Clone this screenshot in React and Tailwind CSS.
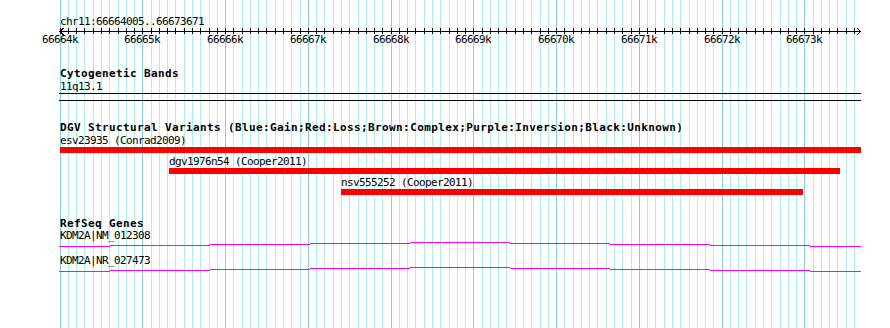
import React from 'react';

const PX_PER_BP = 800 / 9667;
const START = 66664005;
const xAt = (bp) => 60 + (bp - START) * PX_PER_BP;

// grid positions, every 100bp
const ticks = [];
for (let k = 0; k < 97; k++) {
  ticks.push({ x: Math.round(xAt(66664000 + k * 100)), major: k % 10 === 0 });
}

const labels = [];
for (let kb = 66664; kb <= 66673; kb++) {
  labels.push({ text: `${kb}k`, x: Math.round(xAt(kb * 1000)) });
}

const variants = [
  { label: 'esv23935 (Conrad2009)', start: 60, end: 861 },
  { label: 'dgv1976n54 (Cooper2011)', start: 169, end: 840 },
  { label: 'nsv555252 (Cooper2011)', start: 341, end: 803 },
];

const genes = ['KDM2A|NM_012308', 'KDM2A|NR_027473'];

// stepped transcript line: [x1, x2, y]
const geneSteps = [
  [59, 110, 4],
  [110, 210, 3],
  [210, 310, 2],
  [310, 410, 1],
  [410, 510, 0],
  [510, 610, 1],
  [610, 710, 2],
  [710, 810, 3],
  [810, 861, 4],
];

const Grid = () => (
  <svg className="absolute inset-0" width="890" height="328" shapeRendering="crispEdges">
    {ticks.map((t, i) => (
      <rect key={i} x={t.x} y={0} width={1} height={328} fill={t.major ? '#87CEEB' : '#AFEEEE'} />
    ))}
  </svg>
);

const Ruler = () => (
  <div className="relative h-[18px]">
    <svg className="-ml-px block" width="802" height="8" shapeRendering="crispEdges">
      <rect x={1} y={3} width={801} height={1} fill="#000" />
      {ticks.map((t, i) => (
        <rect key={i} x={t.x - 59} y={0} width={1} height={6} fill="#000" />
      ))}
      <polyline points="798,0 801.5,3.5 798,7" fill="none" stroke="#000" strokeWidth="1" />
      <polyline points="4.5,0 1,3.5 4.5,7" fill="none" stroke="#000" strokeWidth="1" />
    </svg>
    {labels.map((l) => (
      <span
        key={l.text}
        className="absolute top-[5px] h-[13px] leading-[13px] tracking-[-0.62px] whitespace-nowrap"
        style={{ left: l.x - 18 - 60 }}
      >
        {l.text}
      </span>
    ))}
  </div>
);

const GeneLine = () => (
  <svg className="-ml-px block" width="802" height="5" shapeRendering="crispEdges">
    {geneSteps.map(([a, b, y], i) => (
      <rect key={i} x={a - 59} y={y} width={b - a} height={1} fill="#FF00FF" />
    ))}
  </svg>
);

export default function App() {
  return (
    <div className="relative w-[890px] h-[328px] bg-white overflow-hidden font-['DejaVu_Sans_Mono',monospace] text-[11px] text-black">
      <Grid />
      <div className="relative flex flex-col pl-[60px]">
        <div className="mt-[15px] h-[13px] leading-[13px] tracking-[-0.62px]">chr11:66664005..66673671</div>
        <Ruler />

        {/* Cytogenetic Bands */}
        <div className="mt-[21px] h-[13px] leading-[13px] font-bold tracking-[0.38px]">Cytogenetic Bands</div>
        <div className="h-[13px] leading-[13px] tracking-[-0.62px]">11q13.1</div>
        <div className="-ml-px w-[802px] h-px bg-black" />
        <div className="mt-[6px] -ml-px w-[802px] h-px bg-black" />

        {/* DGV */}
        <div className="mt-[20px] h-[13px] leading-[13px] font-bold tracking-[0.38px] whitespace-nowrap">
          DGV Structural Variants (Blue:Gain;Red:Loss;Brown:Complex;Purple:Inversion;Black:Unknown)
        </div>
        {variants.map((v) => (
          <div key={v.label} className="mb-[2px]" style={{ marginLeft: v.start - 60 }}>
            <div className="h-[13px] leading-[13px] tracking-[-0.62px] whitespace-nowrap">{v.label}</div>
            <div className="h-[6px] bg-[#FF0000]" style={{ width: v.end - v.start }} />
          </div>
        ))}

        {/* RefSeq */}
        <div className="mt-[20px] h-[12px] leading-[13px] font-bold tracking-[0.38px]">RefSeq Genes</div>
        {genes.map((g, i) => (
          <div key={g} className={i > 0 ? 'mt-[7px]' : ''}>
            <div className="h-[13px] leading-[13px] tracking-[-0.62px]">{g}</div>
            <GeneLine />
          </div>
        ))}
      </div>
    </div>
  );
}
